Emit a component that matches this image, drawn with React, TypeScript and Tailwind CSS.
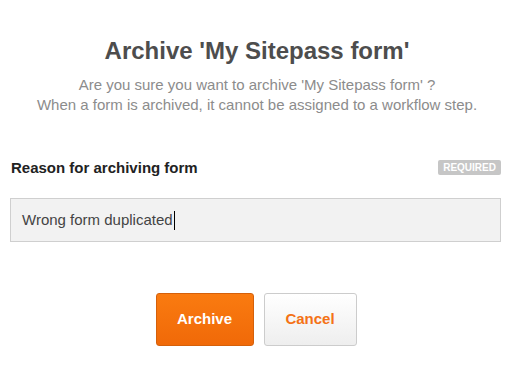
import React from "react";

export default function App() {
  return (
    <div
      className="w-[514px] h-[379px] bg-white flex flex-col pt-[37px]"
      style={{ fontFamily: '"Liberation Sans", Arial, sans-serif' }}
    >
      <h1 className="text-center text-[24px] leading-[28px] font-bold text-[#4d4d4d]">
        Archive 'My Sitepass form'
      </h1>
      <div className="mt-[10px] text-center text-[15px] leading-[20px] text-[#8c8c8c]">
        <p>Are you sure you want to archive 'My Sitepass form' ?</p>
        <p>When a form is archived, it cannot be assigned to a workflow step.</p>
      </div>
      <div className="mt-[44px] ml-[10px] mr-[13px] flex items-center justify-between h-[17px]">
        <span className="text-[15px] leading-[17px] font-bold text-[#222222] pl-[1px]">
          Reason for archiving form
        </span>
        <span className="h-[15px] px-[5px] rounded-[2px] bg-[#c6c6c6] text-white text-[10px] leading-[15px] font-bold">
          REQUIRED
        </span>
      </div>
      <div className="mt-[22px] ml-[10px] mr-[13px] h-[44px] border border-[#cfcfcf] bg-[#f2f2f2] flex items-center pl-[11px]">
        <span className="text-[15px] text-[#444444] leading-[18px]">Wrong form duplicated</span>
        <span className="w-[1px] h-[19px] bg-black ml-[1px]" />
      </div>
      <div className="mt-[51px] flex justify-center gap-[10px] pr-[2px]">
        <button className="w-[98px] h-[53px] rounded-[3px] border border-[#d5600a] bg-gradient-to-b from-[#fa7b10] to-[#f06908] text-white text-[15px] font-bold">
          Archive
        </button>
        <button className="w-[93px] h-[53px] rounded-[3px] border border-[#cccccc] bg-gradient-to-b from-[#ffffff] to-[#eeeeee] text-[#f47216] text-[15px] font-bold">
          Cancel
        </button>
      </div>
    </div>
  );
}
